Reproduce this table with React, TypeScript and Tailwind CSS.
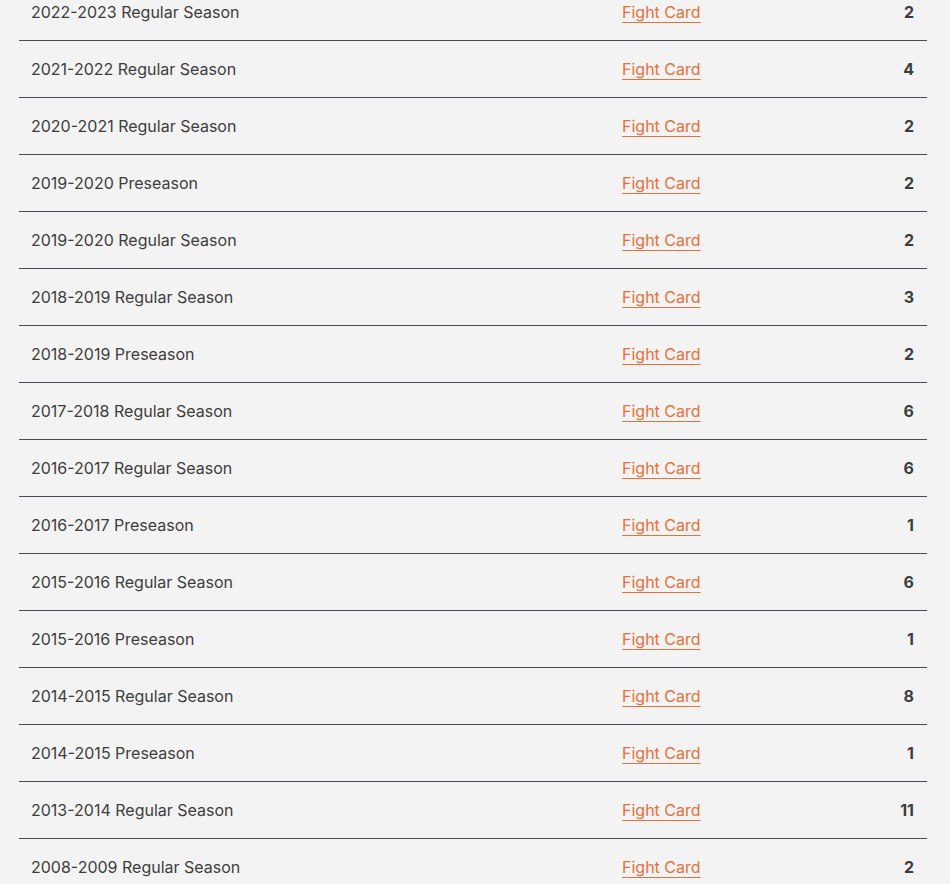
const seasons: [string, number][] = [
  ["2022-2023 Regular Season", 2],
  ["2021-2022 Regular Season", 4],
  ["2020-2021 Regular Season", 2],
  ["2019-2020 Preseason", 2],
  ["2019-2020 Regular Season", 2],
  ["2018-2019 Regular Season", 3],
  ["2018-2019 Preseason", 2],
  ["2017-2018 Regular Season", 6],
  ["2016-2017 Regular Season", 6],
  ["2016-2017 Preseason", 1],
  ["2015-2016 Regular Season", 6],
  ["2015-2016 Preseason", 1],
  ["2014-2015 Regular Season", 8],
  ["2014-2015 Preseason", 1],
  ["2013-2014 Regular Season", 11],
  ["2008-2009 Regular Season", 2],
];

export default function App() {
  return (
    <div className="h-[884px] overflow-hidden bg-[#f3f3f3] font-['Inter',sans-serif] text-[16px] text-[#3d3d3d]">
      <div className="-mt-4 ml-[19px] w-[908px]">
        {seasons.map(([name, count]) => (
          <div
            key={name}
            className="flex h-[57px] items-center border-b border-[#4b4b55]"
          >
            <div className="w-[603px] pl-3">{name}</div>
            <a
              href="#"
              className="text-[#e8703a] underline decoration-1 underline-offset-[4px]"
            >
              Fight Card
            </a>
            <div className="ml-auto pr-[13px] font-bold">{count}</div>
          </div>
        ))}
      </div>
    </div>
  );
}
